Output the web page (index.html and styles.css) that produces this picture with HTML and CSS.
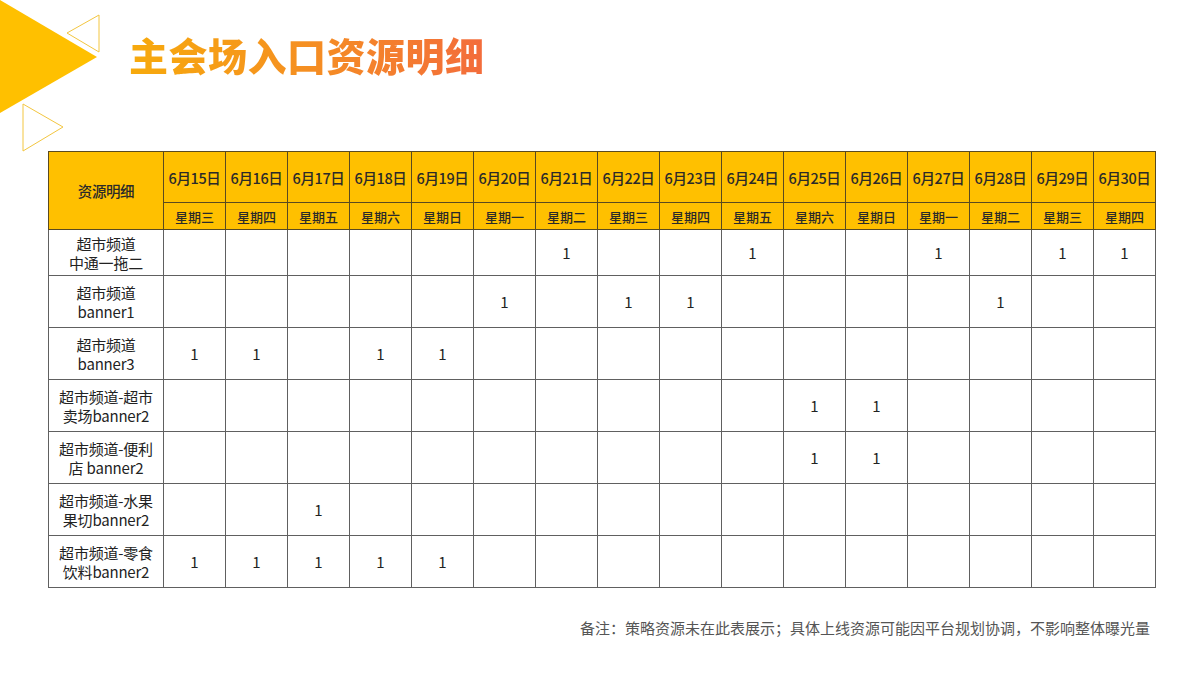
FILE: index.html
```html
<!DOCTYPE html>
<html lang="zh-CN">
<head>
<meta charset="utf-8">
<link rel="stylesheet" href="styles.css">
</head>
<body>
<div class="page">
  <svg class="deco" width="120" height="160" viewBox="0 0 120 160">
    <polygon points="0,0 97,57 0,113" fill="#ffc000"/>
    <polygon points="99,15 67,33 99,52" fill="none" stroke="#f3c640" stroke-width="1"/>
    <polygon points="23,104 63,127 23,151" fill="none" stroke="#f3c640" stroke-width="1"/>
  </svg>
  <header class="head">
    <h1 class="title">主会场入口资源明细</h1>
  </header>
  <main class="content">
    <table class="grid">
      <colgroup>
        <col class="c-name">
        <col span="16" class="c-day">
      </colgroup>
      <thead>
        <tr class="r-date">
          <th rowspan="2" class="h-name">资源明细</th>
          <th>6月15日</th><th>6月16日</th><th>6月17日</th><th>6月18日</th><th>6月19日</th><th>6月20日</th><th>6月21日</th><th>6月22日</th><th>6月23日</th><th>6月24日</th><th>6月25日</th><th>6月26日</th><th>6月27日</th><th>6月28日</th><th>6月29日</th><th>6月30日</th>
        </tr>
        <tr class="r-week">
          <th>星期三</th><th>星期四</th><th>星期五</th><th>星期六</th><th>星期日</th><th>星期一</th><th>星期二</th><th>星期三</th><th>星期四</th><th>星期五</th><th>星期六</th><th>星期日</th><th>星期一</th><th>星期二</th><th>星期三</th><th>星期四</th>
        </tr>
      </thead>
      <tbody>
        <tr class="r-first">
          <td class="name"><span class="ln">超市频道</span><span class="ln">中通一拖二</span></td>
          <td></td><td></td><td></td><td></td><td></td><td></td><td>1</td><td></td><td></td><td>1</td><td></td><td></td><td>1</td><td></td><td>1</td><td>1</td>
        </tr>
        <tr>
          <td class="name"><span class="ln">超市频道</span><span class="ln">banner1</span></td>
          <td></td><td></td><td></td><td></td><td></td><td>1</td><td></td><td>1</td><td>1</td><td></td><td></td><td></td><td></td><td>1</td><td></td><td></td>
        </tr>
        <tr>
          <td class="name"><span class="ln">超市频道</span><span class="ln">banner3</span></td>
          <td>1</td><td>1</td><td></td><td>1</td><td>1</td><td></td><td></td><td></td><td></td><td></td><td></td><td></td><td></td><td></td><td></td><td></td>
        </tr>
        <tr>
          <td class="name"><span class="ln">超市频道-超市</span><span class="ln">卖场banner2</span></td>
          <td></td><td></td><td></td><td></td><td></td><td></td><td></td><td></td><td></td><td></td><td>1</td><td>1</td><td></td><td></td><td></td><td></td>
        </tr>
        <tr>
          <td class="name"><span class="ln">超市频道-便利</span><span class="ln">店 banner2</span></td>
          <td></td><td></td><td></td><td></td><td></td><td></td><td></td><td></td><td></td><td></td><td>1</td><td>1</td><td></td><td></td><td></td><td></td>
        </tr>
        <tr>
          <td class="name"><span class="ln">超市频道-水果</span><span class="ln">果切banner2</span></td>
          <td></td><td></td><td>1</td><td></td><td></td><td></td><td></td><td></td><td></td><td></td><td></td><td></td><td></td><td></td><td></td><td></td>
        </tr>
        <tr>
          <td class="name"><span class="ln">超市频道-零食</span><span class="ln">饮料banner2</span></td>
          <td>1</td><td>1</td><td>1</td><td>1</td><td>1</td><td></td><td></td><td></td><td></td><td></td><td></td><td></td><td></td><td></td><td></td><td></td>
        </tr>
      </tbody>
    </table>
    <p class="note">备注：策略资源未在此表展示；具体上线资源可能因平台规划协调，不影响整体曝光量</p>
  </main>
</div>
</body>
</html>
```

FILE: styles.css
```css
* { box-sizing: border-box; }
html, body {
  margin: 0;
  padding: 0;
  background: #ffffff;
}
body {
  width: 1200px;
  height: 675px;
  overflow: hidden;
  font-family: "Noto Sans CJK SC", "Noto Sans", sans-serif;
  color: #222;
}
.page {
  position: relative;
  width: 1200px;
  height: 675px;
}
.deco {
  position: absolute;
  left: 0;
  top: 0;
}
.head {
  height: 151px;
  padding: 26px 0 0 129px;
}
.title {
  margin: 0;
  font-size: 39px;
  line-height: 56px;
  font-weight: 900;
  letter-spacing: 0.5px;
  display: inline-block;
  background: linear-gradient(90deg, #f7aa0c 0%, #f58f22 50%, #f36c3c 100%);
  -webkit-background-clip: text;
  background-clip: text;
  color: transparent;
}
.content {
  padding-left: 49px;
}
.grid {
  border-collapse: collapse;
  table-layout: fixed;
  width: 1107px;
  margin-left: -1px;
}
.c-name { width: 115px; }
.c-day { width: 62px; }
.grid th, .grid td {
  border: 1px solid #606060;
  text-align: center;
  vertical-align: middle;
  padding: 0;
}
.grid thead th {
  background: #ffc000;
  border-color: #5a4a20;
  color: #2a2a2a;
  font-weight: 500;
  white-space: nowrap;
}
.r-date th {
  height: 51px;
  font-size: 14.5px;
  letter-spacing: -0.4px;
}
.r-week th {
  height: 27px;
  font-size: 13px;
}
.h-name {
  font-size: 14px;
}
.grid tbody tr { height: 52px; }
.grid tbody tr.r-first { height: 46px; }
.grid td {
  font-size: 15px;
  color: #222;
}
.grid td.name {
  font-size: 15px;
  color: #222;
  letter-spacing: -0.2px;
}
.ln {
  display: block;
  height: 19px;
  line-height: 19px;
  white-space: nowrap;
}
.note {
  margin: 30px 0 0 0;
  width: 1101px;
  text-align: right;
  font-size: 15px;
  line-height: 20px;
  color: #555;
}
```
